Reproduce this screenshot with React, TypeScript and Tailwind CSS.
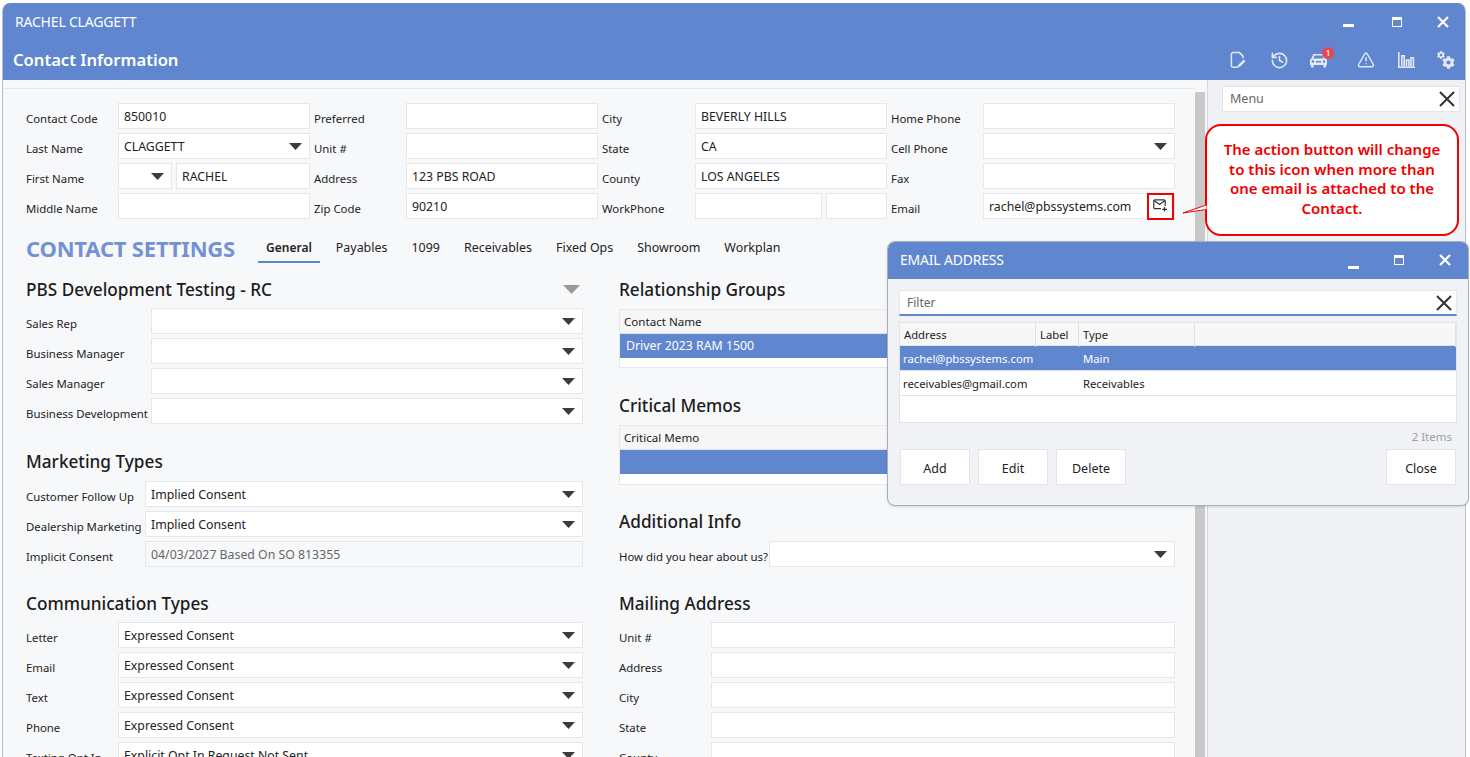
import React from "react";
import { History, TriangleAlert } from "lucide-react";
import { FaCog } from "react-icons/fa";

const Caret = () => (
  <svg width="13" height="7" viewBox="0 0 13 7" className="shrink-0"><path d="M0 0h13L6.5 7z" fill="#3c3c3c" /></svg>
);

const BigX = () => (
  <svg width="16" height="16" viewBox="0 0 16 16" className="shrink-0"><path d="M1 1l14 14M15 1L1 15" stroke="#333" strokeWidth="2" fill="none" /></svg>
);

function Field({ value = "", caret = false, className = "", textClass = "text-[#222]", tint = "bg-white" }: { value?: string; caret?: boolean; className?: string; textClass?: string; tint?: string }) {
  return (
    <div className={`h-[26px] border border-[#e6e7ea] ${tint} flex items-center justify-between pl-[5px] pr-[7px] text-[12.3px] min-w-0 ${textClass} ${className}`}>
      <span className="truncate pt-[2px]">{value}</span>
      {caret && <Caret />}
    </div>
  );
}

function Label({ children, className = "" }: { children: React.ReactNode; className?: string }) {
  return <div className={`text-[11.4px] h-[26px] leading-[31px] text-[#222] whitespace-nowrap ${className}`}>{children}</div>;
}

function Title({ children, className = "" }: { children: React.ReactNode; className?: string }) {
  return <div className={`text-[17.2px] h-[24px] leading-[26px] font-medium text-[#1c1c1c] ${className}`}>{children}</div>;
}

function Row({ label, labelW, value, caret, textClass, tint }: { label: string; labelW: string; value?: string; caret?: boolean; textClass?: string; tint?: string }) {
  return (
    <div className={`grid ${labelW} mb-[4px]`}>
      <Label>{label}</Label>
      <Field value={value} caret={caret} textClass={textClass} tint={tint} />
    </div>
  );
}

function WinButtons({ gap1, gap2 }: { gap1: string; gap2: string }) {
  return (
    <div className="flex items-center text-white">
      <svg width="11" height="12" viewBox="0 0 11 12" className={gap1}><rect x="0" y="9" width="11" height="3" fill="#fff" /></svg>
      <svg width="10" height="10" viewBox="0 0 10 10" className={gap2}><path d="M0 0h10v10H0z M1 3v6h8V3z" fill="#fff" fillRule="evenodd" /></svg>
      <svg width="12" height="12" viewBox="0 0 12 12"><path d="M1 1l10 10M11 1L1 11" stroke="#fff" strokeWidth="2.2" /></svg>
    </div>
  );
}

const FileIcon = () => (
  <svg width="16" height="18" viewBox="0 0 16 18" fill="none" stroke="#e3e9f6" strokeWidth="1.5">
    <path d="M8 16.2H3a1.6 1.6 0 0 1-1.6-1.6V3.2A1.6 1.6 0 0 1 3 1.6h6.5l3.5 3.5v2.2" />
    <path d="M7.5 16.5l.6-2.6 5.6-5.4 1.8 1.8-5.5 5.5z" fill="#e3e9f6" stroke="none" />
  </svg>
);

const CarIcon = () => (
  <svg width="17" height="15" viewBox="0 0 17 15">
    <path d="M3.4 1h10.2l2 4.6c.8.4 1.4 1 1.4 1.9V12h-1v2.4h-2.6V12H3.6v2.4H1V12H0V7.5c0-.9.6-1.5 1.4-1.9zM4.6 2.6 3.3 5.5h10.4l-1.3-2.9zM3 7.2a1.3 1.3 0 1 0 0 2.6 1.3 1.3 0 0 0 0-2.6zm11 0a1.3 1.3 0 1 0 0 2.6 1.3 1.3 0 0 0 0-2.6zM6 8v1.4h5V8z" fill="#e3e9f6" fillRule="evenodd" />
  </svg>
);

const ChartIcon = () => (
  <svg width="17" height="16" viewBox="0 0 17 16" fill="none" stroke="#e3e9f6" strokeWidth="1.6">
    <path d="M.8 0v15.2H17" />
    <path d="M3.8 14.5V3.7h2.4v10.8M8.5 14.5V8h2.4v6.5M13 14.5V5.8h2.4v8.7" />
  </svg>
);

const MailMore = () => (
  <svg width="15" height="13" viewBox="0 0 15 13" fill="none" stroke="#333" strokeWidth="1.2">
    <path d="M8 9.6H2A1.2 1.2 0 0 1 .8 8.4V2A1.2 1.2 0 0 1 2 .8h9A1.2 1.2 0 0 1 12.2 2v5" />
    <path d="M1 1.5l5.5 4 5.5-4" />
    <path d="M11.5 8v4.5M9.2 10.3h4.8" strokeWidth="1.3" />
  </svg>
);

const tabs = ["General", "Payables", "1099", "Receivables", "Fixed Ops", "Showroom", "Workplan"];

export default function App() {
  return (
    <div className="relative h-[757px] w-[1470px] overflow-hidden bg-white pt-[3px] pl-[2px] pr-[4px] font-['Noto_Sans',sans-serif]">
      <div className="h-[754px] rounded-t-lg overflow-hidden border-l border-r border-[#b9bfcb] bg-[#f7f8fa] flex flex-col">
        {/* Header */}
        <div className="bg-[#5f86cf] h-[77px] shrink-0 text-white">
          <div className="h-[37px] flex items-center justify-between pl-[12px] pr-[16px]">
            <span className="text-[14px] tracking-[-0.2px]">RACHEL CLAGGETT</span>
            <WinButtons gap1="mr-[38px] -mt-[2px]" gap2="mr-[35px]" />
          </div>
          <div className="h-[40px] flex items-center justify-between pl-[10px] pr-[10px]">
            <span className="text-[16.6px] font-semibold">Contact Information</span>
            <div className="flex items-center text-[#e3e9f6]">
              <FileIcon />
              <History size={19} className="ml-[24px]" />
              <span className="relative ml-[21px]">
                <CarIcon />
                <span className="absolute -top-[6px] left-[12px] w-[12px] h-[12px] rounded-full bg-[#ef4444] text-white text-[8px] leading-[12px] text-center font-semibold">1</span>
              </span>
              <TriangleAlert size={18} className="ml-[30px]" />
              <span className="ml-[23px]"><ChartIcon /></span>
              <span className="relative ml-[22px] w-[18px] h-[18px] block">
                <FaCog size={8} className="absolute left-0 top-0" />
                <FaCog size={13} className="absolute right-0 bottom-0" />
              </span>
            </div>
          </div>
        </div>

        <div className="flex flex-1 min-h-0">
          {/* Main */}
          <div className="w-[1192px] shrink-0 border-t border-[#e6e7ea] mt-[8px] pl-[23px] relative">
            <div className="pt-[14px] grid grid-cols-[92px_192px_96px_192px_97px_192px_96px_192px] gap-y-[4px] w-[1150px] [&>*]:min-w-0">
              <Label>Contact Code</Label><Field value="850010" />
              <Label className="pl-[4px]">Preferred</Label><Field />
              <Label className="pl-[4px]">City</Label><Field value="BEVERLY HILLS" />
              <Label className="pl-[4px]">Home Phone</Label><Field />

              <Label>Last Name</Label><Field value="CLAGGETT" caret />
              <Label className="pl-[4px]">Unit #</Label><Field />
              <Label className="pl-[4px]">State</Label><Field value="CA" />
              <Label className="pl-[4px]">Cell Phone</Label><Field caret />

              <Label>First Name</Label>
              <div className="flex gap-[4px]"><Field caret className="w-[54px] shrink-0" /><Field value="RACHEL" className="flex-1" /></div>
              <Label className="pl-[4px]">Address</Label><Field value="123 PBS ROAD" />
              <Label className="pl-[4px]">County</Label><Field value="LOS ANGELES" />
              <Label className="pl-[4px]">Fax</Label><Field />

              <Label>Middle Name</Label><Field />
              <Label className="pl-[4px]">Zip Code</Label><Field value="90210" />
              <Label className="pl-[4px]">WorkPhone</Label>
              <div className="flex gap-[4px]"><Field className="w-[127px] shrink-0" /><Field className="flex-1" /></div>
              <Label className="pl-[4px]">Email</Label>
              <div className="relative">
                <Field value="rachel@pbssystems.com" />
                <div className="absolute right-[1px] top-0 w-[27px] h-[27px] border-2 border-[#f00000] flex items-center justify-center pb-[2px]">
                  <MailMore />
                </div>
              </div>
            </div>

            {/* Settings header */}
            <div className="flex items-center h-[34px] mt-[13px]">
              <div className="text-[22px] font-bold text-[#7491d4] w-[232px] pb-[2px] whitespace-nowrap tracking-[-0.2px]">CONTACT SETTINGS</div>
              <div className="flex text-[12.45px] text-[#222] h-[28px] mt-[-1px]">
                {tabs.map((t, i) => (
                  <div key={t} className={`px-[8px] mr-[8px] h-[28px] flex items-center ${i === 0 ? "border-b-2 border-[#5f86cf] font-semibold text-[12px]" : ""}`}>{t}</div>
                ))}
              </div>
            </div>

            {/* Two columns */}
            <div className="flex gap-[36px] mt-[11px] w-[1150px]">
              <div className="w-[557px] shrink-0">
                <div className="flex items-center justify-between pr-[3px] mb-[7px]">
                  <Title>PBS Development Testing - RC</Title>
                  <svg width="17" height="9" viewBox="0 0 17 9"><path d="M0 0h17L8.5 9z" fill="#9a9a9a" /></svg>
                </div>
                {["Sales Rep", "Business Manager", "Sales Manager", "Business Development"].map((l) => (
                  <Row key={l} label={l} labelW="grid-cols-[125px_1fr]" caret />
                ))}
                <Title className="mt-[25px] mb-[8px]">Marketing Types</Title>
                <Row label="Customer Follow Up" labelW="grid-cols-[119px_1fr]" value="Implied Consent" caret />
                <Row label="Dealership Marketing" labelW="grid-cols-[119px_1fr]" value="Implied Consent" caret />
                <Row label="Implicit Consent" labelW="grid-cols-[119px_1fr]" value="04/03/2027 Based On SO 813355" textClass="text-[#666]" tint="bg-[#f7f8fa]" />
                <Title className="mt-[24px] mb-[7px]">Communication Types</Title>
                {["Letter", "Email", "Text", "Phone"].map((l) => (
                  <Row key={l} label={l} labelW="grid-cols-[92px_1fr]" value="Expressed Consent" caret />
                ))}
                <Row label="Texting Opt In" labelW="grid-cols-[92px_1fr]" value="Explicit Opt In Request Not Sent" caret />
              </div>

              <div className="w-[556px] shrink-0">
                <Title className="mb-[8px]">Relationship Groups</Title>
                <div className="border border-[#e6e7ea] bg-white h-[59px] text-[11.6px]">
                  <div className="h-[24px] bg-[#f6f6f7] border-b border-[#e0e1e4] pl-[4px] leading-[24px] text-[#222]">Contact Name</div>
                  <div className="h-[24px] bg-[#5f86cf] text-white pl-[6px] leading-[23px] text-[12.3px]">Driver 2023 RAM 1500</div>
                </div>
                <Title className="mt-[25px] mb-[8px]">Critical Memos</Title>
                <div className="border border-[#e6e7ea] bg-white h-[60px] text-[11.6px]">
                  <div className="h-[24px] bg-[#f6f6f7] border-b border-[#e0e1e4] pl-[4px] leading-[24px] text-[#222]">Critical Memo</div>
                  <div className="h-[24px] bg-[#5f86cf]" />
                </div>
                <Title className="mt-[24px] mb-[8px]">Additional Info</Title>
                <div className="grid grid-cols-[150px_1fr]">
                  <Label>How did you hear about us?</Label>
                  <Field caret />
                </div>
                <Title className="mt-[24px] mb-[7px]">Mailing Address</Title>
                {["Unit #", "Address", "City", "State", "County"].map((l) => (
                  <Row key={l} label={l} labelW="grid-cols-[92px_1fr]" />
                ))}
              </div>
            </div>
          </div>

          {/* Scrollbar */}
          <div className="w-[12px] shrink-0 flex justify-start pt-[12px]">
            <div className="w-[10px] h-full bg-[#c9c9c9]" />
          </div>

          {/* Menu panel */}
          <div className="flex-1 bg-[#eff1f5] border-l border-[#d5d7dc] pt-[6px] pl-[14px] pr-[5px]">
            <div className="h-[26px] border border-[#e3e4e8] bg-white flex items-center justify-between pl-[7px] pr-[4px] text-[12.5px] text-[#666]">
              <span className="pt-[1px]">Menu</span>
              <BigX />
            </div>
          </div>
        </div>
      </div>

      {/* Callout */}
      <div className="absolute left-[1205px] top-[124px] w-[254px] h-[112px] rounded-[16px] border-2 border-[#f00000] bg-white flex items-center justify-center text-center text-[#f00000] text-[15px] leading-[19.5px] font-semibold px-[14px] pb-[2px]">
        The action button will change to this icon when more than one email is attached to the Contact.
      </div>
      <svg className="absolute left-[1182px] top-[200px]" width="28" height="20" viewBox="0 0 28 20">
        <path d="M23 5.5 L1 13 L24 9.5" fill="#fff" stroke="#f00000" strokeWidth="1" />
        <path d="M22 6 L24.5 5.5 V9 L22 9.6z" fill="#fff" />
      </svg>

      {/* Email dialog */}
      <div className="absolute left-[887px] top-[241px] w-[582px] h-[265px] rounded-lg border border-[#a9afbb] bg-[#f0f2f6] overflow-hidden flex flex-col shadow-sm">
        <div className="h-[37px] shrink-0 bg-[#5f86cf] text-white flex items-center justify-between pl-[12px] pr-[17px] pb-[2px]">
          <span className="text-[14px] tracking-[-0.2px]">EMAIL ADDRESS</span>
          <WinButtons gap1="mr-[35px] mt-[6px]" gap2="mr-[35px]" />
        </div>
        <div className="flex-1 pl-[11px] pr-[11px] pt-[11px] flex flex-col">
          <div className="h-[26px] bg-white border border-[#e6e7ea] border-b-2 border-b-[#5f86cf] flex items-center justify-between pl-[7px] pr-[4px] text-[12px] text-[#666]">
            <span>Filter</span>
            <BigX />
          </div>
          <div className="mt-[6px] h-[101px] border border-[#e3e4e8] bg-white text-[11.25px] text-[#222] shrink-0">
            <div className="h-[23px] grid grid-cols-[136px_43px_116px_1fr] bg-[#f7f7f8] border-b border-[#dfe0e3] leading-[24px] [&>div]:border-r [&>div]:border-[#dfe0e3] [&>div]:pl-[4px]">
              <div>Address</div><div>Label</div><div>Type</div><div />
            </div>
            <div className="h-[25px] grid grid-cols-[179px_1fr] bg-[#5f86cf] text-white leading-[25px] border-b border-[#e3e4e8]">
              <div className="pl-[3px] truncate">rachel@pbssystems.com</div><div className="pl-[4px]">Main</div>
            </div>
            <div className="h-[25px] grid grid-cols-[179px_1fr] leading-[25px] border-b border-[#e3e4e8]">
              <div className="pl-[3px]">receivables@gmail.com</div><div className="pl-[4px]">Receivables</div>
            </div>
          </div>
          <div className="text-right text-[11.5px] text-[#a0a0a0] pr-[5px] mt-[6px] h-[20px] leading-[16px]">2 Items</div>
          <div className="flex justify-between pl-[1px] pr-[1px]">
            <div className="flex gap-[8px]">
              {["Add", "Edit", "Delete"].map((b) => (
                <div key={b} className="w-[70px] h-[36px] pt-[5px] bg-white border border-[#e3e4e8] flex items-center justify-center text-[12.5px] text-[#222]">{b}</div>
              ))}
            </div>
            <div className="w-[70px] h-[36px] pt-[5px] bg-white border border-[#e3e4e8] flex items-center justify-center text-[12.5px] text-[#222]">Close</div>
          </div>
        </div>
      </div>
    </div>
  );
}
